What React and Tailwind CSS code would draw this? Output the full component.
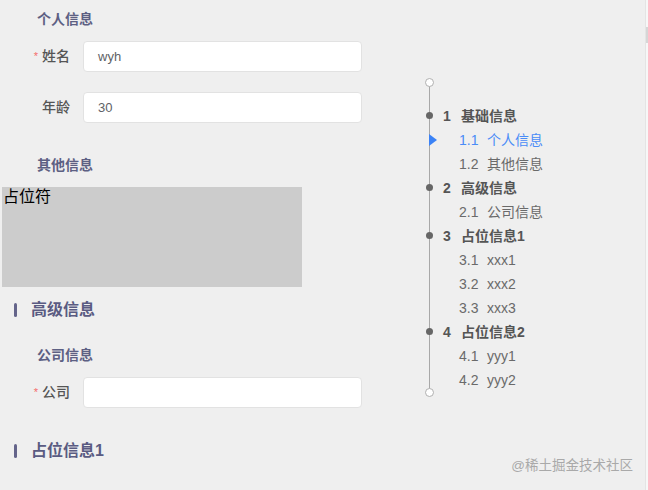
const font = { fontFamily: '"Liberation Sans", "Noto Sans CJK SC", sans-serif' };

function SubTitle({ children, className = "" }) {
  return (
    <div className={`h-[20px] pl-[37px] text-[14px] leading-[20px] font-semibold text-[#5d6083] ${className}`}>
      {children}
    </div>
  );
}

function Heading({ children, className = "" }) {
  return (
    <div className={`h-[20px] flex items-center pl-[14px] ${className}`}>
      <span className="w-[3px] h-[14px] rounded-full bg-[#64648a]" />
      <span className="ml-[14px] text-[16px] leading-[20px] font-semibold text-[#5a5b82]">{children}</span>
    </div>
  );
}

function FormRow({ label, required, value, className = "" }) {
  return (
    <div className={`flex items-center h-[31px] ${className}`}>
      <div className="w-[83px] pr-[13px] flex justify-end items-center text-[14px] font-medium text-[#555]">
        {required && <span className="text-[#f56c6c] text-[11px] mr-[4px]">*</span>}
        {label}
      </div>
      <div className="w-[279px] h-[31px] bg-white border border-[#e2e2e2] rounded-[4px] flex items-center pl-[14px] text-[13px] text-[#606266]">
        {value}
      </div>
    </div>
  );
}

const anchors = [
  { n: "1", t: "基础信息", level: 1 },
  { n: "1.1", t: "个人信息", level: 2, active: true },
  { n: "1.2", t: "其他信息", level: 2 },
  { n: "2", t: "高级信息", level: 1 },
  { n: "2.1", t: "公司信息", level: 2 },
  { n: "3", t: "占位信息1", level: 1 },
  { n: "3.1", t: "xxx1", level: 2 },
  { n: "3.2", t: "xxx2", level: 2 },
  { n: "3.3", t: "xxx3", level: 2 },
  { n: "4", t: "占位信息2", level: 1 },
  { n: "4.1", t: "yyy1", level: 2 },
  { n: "4.2", t: "yyy2", level: 2 },
];

function Anchor() {
  return (
    <div className="relative w-[130px] pt-[26px] pb-[5px]">
      <div className="absolute left-[4px] top-[4px] bottom-[4px] w-px bg-[#a8a8a8]" />
      <div className="absolute left-0 top-0 w-[9px] h-[9px] rounded-full bg-white border border-[#b0b0b0]" />
      <div className="absolute left-0 bottom-0 w-[9px] h-[9px] rounded-full bg-white border border-[#b0b0b0]" />
      {anchors.map((a) => (
        <div key={a.n} className="relative h-[24px] flex items-center text-[14px]">
          {a.level === 1 && (
            <span className="absolute left-[1px] top-[8px] w-[7px] h-[7px] rounded-full bg-[#666]" />
          )}
          {a.active && (
            <span className="absolute left-[4px] top-[6px] w-0 h-0 border-y-[6px] border-y-transparent border-l-[8px] border-l-[#3b82f6]" />
          )}
          {a.level === 1 ? (
            <div className="pl-[18px] flex font-semibold text-[#555]">
              <span className="w-[18px]">{a.n}</span>
              <span>{a.t}</span>
            </div>
          ) : (
            <div className={`pl-[34px] flex ${a.active ? "text-[#4a8cf7]" : "text-[#6a6a6a]"}`}>
              <span className="w-[28px]">{a.n}</span>
              <span>{a.t}</span>
            </div>
          )}
        </div>
      ))}
    </div>
  );
}

export default function App() {
  return (
    <div className="relative w-[648px] h-[490px] overflow-hidden bg-[#efefef] flex" style={font}>
      <div className="flex-1 flex">
        <div className="w-[362px] flex flex-col">
          <SubTitle className="mt-[9px]">个人信息</SubTitle>
          <FormRow label="姓名" required value="wyh" className="mt-[12px]" />
          <FormRow label="年龄" value="30" className="mt-[20px]" />
          <SubTitle className="mt-[32px]">其他信息</SubTitle>
          <div className="mt-[12px] ml-[2px] w-[300px] h-[100px] bg-[#cccccc] text-[16px] leading-[20px] text-black pl-[1px]">
            占位符
          </div>
          <Heading className="mt-[13px]">高级信息</Heading>
          <SubTitle className="mt-[25px]">公司信息</SubTitle>
          <FormRow label="公司" required value="" className="mt-[12px]" />
          <Heading className="mt-[33px]">占位信息1</Heading>
        </div>
        <div className="ml-[63px] pt-[78px]">
          <Anchor />
        </div>
      </div>
      <div className="w-[3px] bg-[#f7f7f7] border-l border-[#e4e4e4] pt-[27px]">
        <div className="h-[16px] bg-[#d6d6d6]" />
      </div>
      <div className="absolute right-[15px] bottom-[14px] text-[13.5px] text-[#a9a9a9]">@稀土掘金技术社区</div>
    </div>
  );
}
